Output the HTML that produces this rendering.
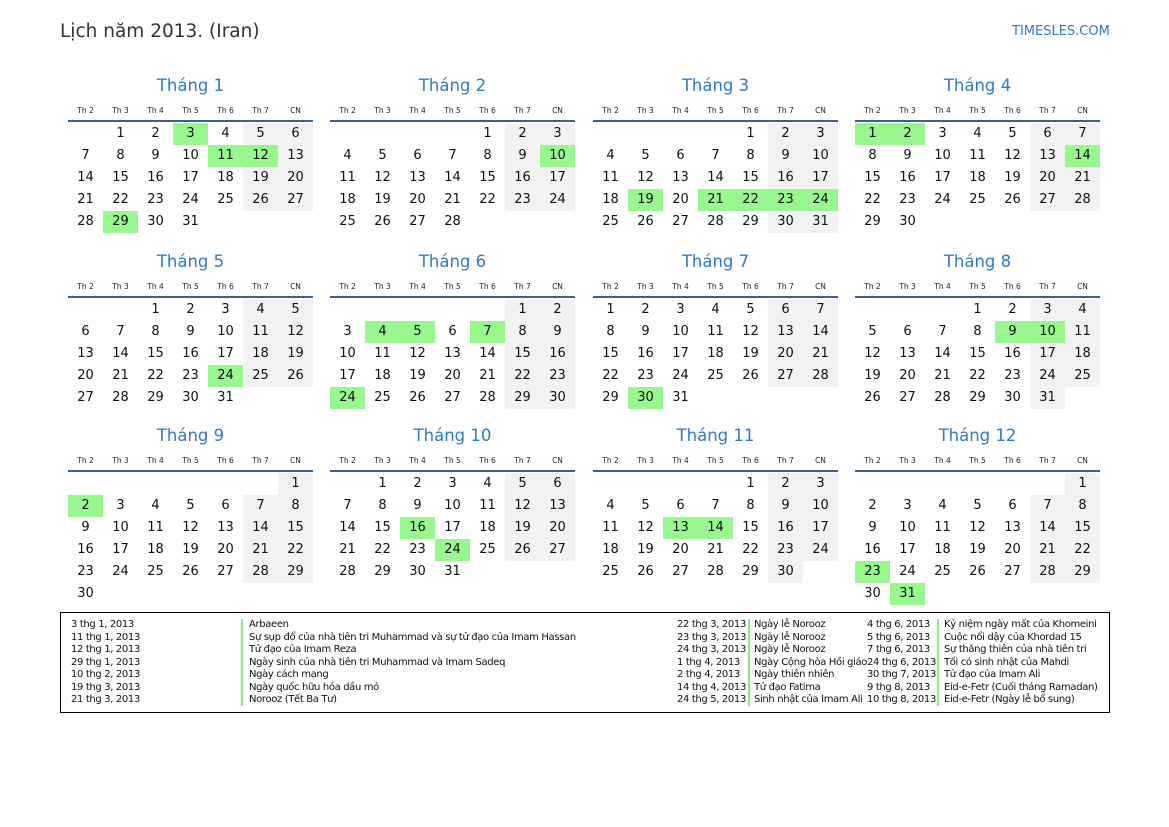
<!DOCTYPE html>
<html><head><meta charset="utf-8"><style>
*{margin:0;padding:0;box-sizing:border-box}
body{width:1169px;height:827px;background:#fff;font-family:"DejaVu Sans","Liberation Sans",sans-serif;position:relative;overflow:hidden;color:#111}
i{font-style:normal}
.t{position:absolute;left:60px;top:21px;font-size:18.5px;color:#333}
.s{position:absolute;left:1012px;top:24px;font-size:13px;color:#2e7bc4}
.m{position:absolute;width:245px;margin-top:1px}
.m h2{font-weight:normal;font-size:16.5px;color:#2e7bc4;text-align:center;height:22px;line-height:22px}
.hd{display:grid;grid-template-columns:repeat(7,35px);font-size:7.5px;text-align:center;margin-top:7px;height:14px;line-height:14px;color:#222}
.ln{height:2px;background:#3d5f8f;margin-top:2px}
.g{display:grid;grid-template-columns:repeat(7,35px);grid-auto-rows:22px;font-size:13px;text-align:center;line-height:22px;margin-top:1px}
.g span:nth-child(7n),.g span:nth-child(7n-1){background:#f2f2f2}
.g span.h{background:#99f790}
.lg{position:absolute;left:60px;top:612px;width:1050px;height:101px;border:1px solid #000;font-size:10px;line-height:12.5px;letter-spacing:-0.35px}
.c{position:absolute;top:6px;white-space:nowrap}
.b{position:absolute;top:6px;width:2px;height:87px;background:#8de88a}
</style></head><body>
<div class="t">Lịch năm 2013. (Iran)</div>
<div class="s">TIMESLES.COM</div>

<div class="m" style="left:68px;top:74px"><h2>Tháng 1</h2><div class="hd"><i>Th 2</i><i>Th 3</i><i>Th 4</i><i>Th 5</i><i>Th 6</i><i>Th 7</i><i>CN</i></div><div class="ln"></div><div class="g"><i></i><span>1</span><span>2</span><span class="h">3</span><span>4</span><span>5</span><span>6</span><span>7</span><span>8</span><span>9</span><span>10</span><span class="h">11</span><span class="h">12</span><span>13</span><span>14</span><span>15</span><span>16</span><span>17</span><span>18</span><span>19</span><span>20</span><span>21</span><span>22</span><span>23</span><span>24</span><span>25</span><span>26</span><span>27</span><span>28</span><span class="h">29</span><span>30</span><span>31</span></div></div>

<div class="m" style="left:330px;top:74px"><h2>Tháng 2</h2><div class="hd"><i>Th 2</i><i>Th 3</i><i>Th 4</i><i>Th 5</i><i>Th 6</i><i>Th 7</i><i>CN</i></div><div class="ln"></div><div class="g"><i></i><i></i><i></i><i></i><span>1</span><span>2</span><span>3</span><span>4</span><span>5</span><span>6</span><span>7</span><span>8</span><span>9</span><span class="h">10</span><span>11</span><span>12</span><span>13</span><span>14</span><span>15</span><span>16</span><span>17</span><span>18</span><span>19</span><span>20</span><span>21</span><span>22</span><span>23</span><span>24</span><span>25</span><span>26</span><span>27</span><span>28</span></div></div>

<div class="m" style="left:593px;top:74px"><h2>Tháng 3</h2><div class="hd"><i>Th 2</i><i>Th 3</i><i>Th 4</i><i>Th 5</i><i>Th 6</i><i>Th 7</i><i>CN</i></div><div class="ln"></div><div class="g"><i></i><i></i><i></i><i></i><span>1</span><span>2</span><span>3</span><span>4</span><span>5</span><span>6</span><span>7</span><span>8</span><span>9</span><span>10</span><span>11</span><span>12</span><span>13</span><span>14</span><span>15</span><span>16</span><span>17</span><span>18</span><span class="h">19</span><span>20</span><span class="h">21</span><span class="h">22</span><span class="h">23</span><span class="h">24</span><span>25</span><span>26</span><span>27</span><span>28</span><span>29</span><span>30</span><span>31</span></div></div>

<div class="m" style="left:855px;top:74px"><h2>Tháng 4</h2><div class="hd"><i>Th 2</i><i>Th 3</i><i>Th 4</i><i>Th 5</i><i>Th 6</i><i>Th 7</i><i>CN</i></div><div class="ln"></div><div class="g"><span class="h">1</span><span class="h">2</span><span>3</span><span>4</span><span>5</span><span>6</span><span>7</span><span>8</span><span>9</span><span>10</span><span>11</span><span>12</span><span>13</span><span class="h">14</span><span>15</span><span>16</span><span>17</span><span>18</span><span>19</span><span>20</span><span>21</span><span>22</span><span>23</span><span>24</span><span>25</span><span>26</span><span>27</span><span>28</span><span>29</span><span>30</span></div></div>

<div class="m" style="left:68px;top:250px"><h2>Tháng 5</h2><div class="hd"><i>Th 2</i><i>Th 3</i><i>Th 4</i><i>Th 5</i><i>Th 6</i><i>Th 7</i><i>CN</i></div><div class="ln"></div><div class="g"><i></i><i></i><span>1</span><span>2</span><span>3</span><span>4</span><span>5</span><span>6</span><span>7</span><span>8</span><span>9</span><span>10</span><span>11</span><span>12</span><span>13</span><span>14</span><span>15</span><span>16</span><span>17</span><span>18</span><span>19</span><span>20</span><span>21</span><span>22</span><span>23</span><span class="h">24</span><span>25</span><span>26</span><span>27</span><span>28</span><span>29</span><span>30</span><span>31</span></div></div>

<div class="m" style="left:330px;top:250px"><h2>Tháng 6</h2><div class="hd"><i>Th 2</i><i>Th 3</i><i>Th 4</i><i>Th 5</i><i>Th 6</i><i>Th 7</i><i>CN</i></div><div class="ln"></div><div class="g"><i></i><i></i><i></i><i></i><i></i><span>1</span><span>2</span><span>3</span><span class="h">4</span><span class="h">5</span><span>6</span><span class="h">7</span><span>8</span><span>9</span><span>10</span><span>11</span><span>12</span><span>13</span><span>14</span><span>15</span><span>16</span><span>17</span><span>18</span><span>19</span><span>20</span><span>21</span><span>22</span><span>23</span><span class="h">24</span><span>25</span><span>26</span><span>27</span><span>28</span><span>29</span><span>30</span></div></div>

<div class="m" style="left:593px;top:250px"><h2>Tháng 7</h2><div class="hd"><i>Th 2</i><i>Th 3</i><i>Th 4</i><i>Th 5</i><i>Th 6</i><i>Th 7</i><i>CN</i></div><div class="ln"></div><div class="g"><span>1</span><span>2</span><span>3</span><span>4</span><span>5</span><span>6</span><span>7</span><span>8</span><span>9</span><span>10</span><span>11</span><span>12</span><span>13</span><span>14</span><span>15</span><span>16</span><span>17</span><span>18</span><span>19</span><span>20</span><span>21</span><span>22</span><span>23</span><span>24</span><span>25</span><span>26</span><span>27</span><span>28</span><span>29</span><span class="h">30</span><span>31</span></div></div>

<div class="m" style="left:855px;top:250px"><h2>Tháng 8</h2><div class="hd"><i>Th 2</i><i>Th 3</i><i>Th 4</i><i>Th 5</i><i>Th 6</i><i>Th 7</i><i>CN</i></div><div class="ln"></div><div class="g"><i></i><i></i><i></i><span>1</span><span>2</span><span>3</span><span>4</span><span>5</span><span>6</span><span>7</span><span>8</span><span class="h">9</span><span class="h">10</span><span>11</span><span>12</span><span>13</span><span>14</span><span>15</span><span>16</span><span>17</span><span>18</span><span>19</span><span>20</span><span>21</span><span>22</span><span>23</span><span>24</span><span>25</span><span>26</span><span>27</span><span>28</span><span>29</span><span>30</span><span>31</span></div></div>

<div class="m" style="left:68px;top:424px"><h2>Tháng 9</h2><div class="hd"><i>Th 2</i><i>Th 3</i><i>Th 4</i><i>Th 5</i><i>Th 6</i><i>Th 7</i><i>CN</i></div><div class="ln"></div><div class="g"><i></i><i></i><i></i><i></i><i></i><i></i><span>1</span><span class="h">2</span><span>3</span><span>4</span><span>5</span><span>6</span><span>7</span><span>8</span><span>9</span><span>10</span><span>11</span><span>12</span><span>13</span><span>14</span><span>15</span><span>16</span><span>17</span><span>18</span><span>19</span><span>20</span><span>21</span><span>22</span><span>23</span><span>24</span><span>25</span><span>26</span><span>27</span><span>28</span><span>29</span><span>30</span></div></div>

<div class="m" style="left:330px;top:424px"><h2>Tháng 10</h2><div class="hd"><i>Th 2</i><i>Th 3</i><i>Th 4</i><i>Th 5</i><i>Th 6</i><i>Th 7</i><i>CN</i></div><div class="ln"></div><div class="g"><i></i><span>1</span><span>2</span><span>3</span><span>4</span><span>5</span><span>6</span><span>7</span><span>8</span><span>9</span><span>10</span><span>11</span><span>12</span><span>13</span><span>14</span><span>15</span><span class="h">16</span><span>17</span><span>18</span><span>19</span><span>20</span><span>21</span><span>22</span><span>23</span><span class="h">24</span><span>25</span><span>26</span><span>27</span><span>28</span><span>29</span><span>30</span><span>31</span></div></div>

<div class="m" style="left:593px;top:424px"><h2>Tháng 11</h2><div class="hd"><i>Th 2</i><i>Th 3</i><i>Th 4</i><i>Th 5</i><i>Th 6</i><i>Th 7</i><i>CN</i></div><div class="ln"></div><div class="g"><i></i><i></i><i></i><i></i><span>1</span><span>2</span><span>3</span><span>4</span><span>5</span><span>6</span><span>7</span><span>8</span><span>9</span><span>10</span><span>11</span><span>12</span><span class="h">13</span><span class="h">14</span><span>15</span><span>16</span><span>17</span><span>18</span><span>19</span><span>20</span><span>21</span><span>22</span><span>23</span><span>24</span><span>25</span><span>26</span><span>27</span><span>28</span><span>29</span><span>30</span></div></div>

<div class="m" style="left:855px;top:424px"><h2>Tháng 12</h2><div class="hd"><i>Th 2</i><i>Th 3</i><i>Th 4</i><i>Th 5</i><i>Th 6</i><i>Th 7</i><i>CN</i></div><div class="ln"></div><div class="g"><i></i><i></i><i></i><i></i><i></i><i></i><span>1</span><span>2</span><span>3</span><span>4</span><span>5</span><span>6</span><span>7</span><span>8</span><span>9</span><span>10</span><span>11</span><span>12</span><span>13</span><span>14</span><span>15</span><span>16</span><span>17</span><span>18</span><span>19</span><span>20</span><span>21</span><span>22</span><span class="h">23</span><span>24</span><span>25</span><span>26</span><span>27</span><span>28</span><span>29</span><span>30</span><span class="h">31</span></div></div>

<div class="lg">
<div class="c" style="left:10px">3 thg 1, 2013<br>11 thg 1, 2013<br>12 thg 1, 2013<br>29 thg 1, 2013<br>10 thg 2, 2013<br>19 thg 3, 2013<br>21 thg 3, 2013</div>
<div class="b" style="left:180px"></div>
<div class="c" style="left:188px">Arbaeen<br>Sự sụp đổ của nhà tiên tri Muhammad và sự tử đạo của Imam Hassan<br>Tử đạo của Imam Reza<br>Ngày sinh của nhà tiên tri Muhammad và Imam Sadeq<br>Ngày cách mạng<br>Ngày quốc hữu hóa dầu mỏ<br>Norooz (Tết Ba Tư)</div>
<div class="c" style="left:616px">22 thg 3, 2013<br>23 thg 3, 2013<br>24 thg 3, 2013<br>1 thg 4, 2013<br>2 thg 4, 2013<br>14 thg 4, 2013<br>24 thg 5, 2013</div>
<div class="b" style="left:687px"></div>
<div class="c" style="left:693px">Ngày lễ Norooz<br>Ngày lễ Norooz<br>Ngày lễ Norooz<br>Ngày Cộng hòa Hồi giáo<br>Ngày thiên nhiên<br>Tử đạo Fatima<br>Sinh nhật của Imam Ali</div>
<div class="c" style="left:806px">4 thg 6, 2013<br>5 thg 6, 2013<br>7 thg 6, 2013<br>24 thg 6, 2013<br>30 thg 7, 2013<br>9 thg 8, 2013<br>10 thg 8, 2013</div>
<div class="b" style="left:876px"></div>
<div class="c" style="left:883px">Kỷ niệm ngày mất của Khomeini<br>Cuộc nổi dậy của Khordad 15<br>Sự thăng thiên của nhà tiên tri<br>Tối có sinh nhật của Mahdi<br>Tử đạo của Imam Ali<br>Eid-e-Fetr (Cuối tháng Ramadan)<br>Eid-e-Fetr (Ngày lễ bổ sung)</div>
</div>
</body></html>
